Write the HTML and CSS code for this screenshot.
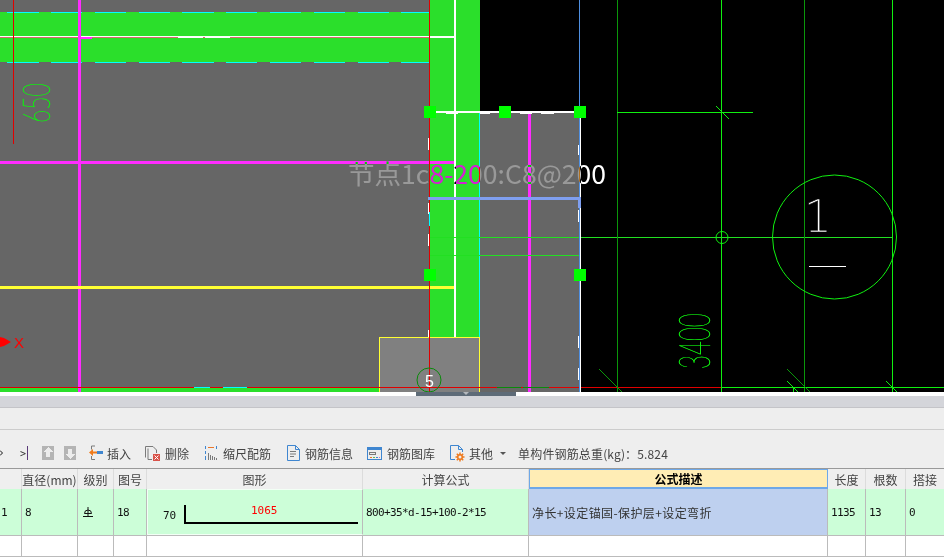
FILE: index.html
```html
<!DOCTYPE html>
<html lang="zh-CN">
<head>
<meta charset="utf-8">
<title>钢筋编辑</title>
<link rel="stylesheet" href="styles.css">
</head>
<body>
<div class="app">
  <svg class="cad" width="944" height="392" viewBox="0 0 944 392" shape-rendering="crispEdges">
    <rect class="f-black" x="0" y="0" width="944" height="392"/>
    <rect class="f-gray" x="0" y="0" width="430" height="392"/>
    <rect class="f-gray" x="430" y="112" width="150" height="280"/>
    <rect class="f-green" x="0" y="12" width="430" height="50"/>
    <rect class="f-green" x="430" y="0" width="50" height="337"/>
    <rect class="f-green" x="0" y="388" width="380" height="4"/>
    <rect class="f-light" x="379" y="337" width="101" height="55"/>
    <path class="s-cyan" d="M7 12.500H39M51 12.500H82M95 12.500H126M139 12.500H170M182 12.500H214M226 12.500H257M270 12.500H301M314 12.500H345M358 12.500H389M401 12.500H429M7 62.500H39M51 62.500H82M95 62.500H126M139 62.500H170M182 62.500H214M226 62.500H257M270 62.500H301M314 62.500H345M358 62.500H389M401 62.500H429M479.500 112V337"/>
    <path class="s-white" d="M0 36.500H429"/>
    <path class="s-pink" d="M0 37.500H178M203 37.500H205M230 37.500H429"/>
    <path class="s-white" d="M178 37.500H203M205 37.500H230"/>
    <rect class="f-white" x="429" y="36" width="25" height="2"/>
    <rect class="f-white" x="454" y="0" width="2" height="337"/>
    <rect class="f-magenta" x="78" y="0" width="3" height="392"/>
    <rect class="f-magenta" x="81" y="37" width="11" height="2"/>
    <rect class="f-magenta" x="0" y="161" width="454" height="3"/>
    <rect class="f-magenta" x="528" y="113" width="3" height="279"/>
    <rect class="f-yellow" x="0" y="286" width="454" height="3"/>
    <path class="s-yellow" d="M379.500 392V337.500H479.500V392"/>
    <path class="s-green" d="M430 237.500H893M430 255.500H579"/>
    <path class="s-red" d="M13.500 0V144M429.500 0V392M0 387.500H722"/>
    <path class="s-cyan" d="M194 387.500H210M223 387.500H247"/>
    <path class="s-dim" d="M497 387.500H521M523 387.500H549"/>
    <path class="s-blue" d="M579.500 0V392"/>
    <path class="s-white" d="M580.500 112V392M428.500 138V150M428.500 203V214M428.500 234V246M428.500 330V337M578.500 145V155M578.500 210V222M578.500 336V348M578.500 368V380"/>
    <path class="s-cyan" d="M429.500 212V226"/>
    <rect class="f-white" x="430" y="111" width="150" height="2"/>
    <path class="s-white" d="M446 113.500H458M480 113.500H490M520 113.500H532M541 113.500H554"/>
    <rect class="f-peri" x="428" y="197" width="152" height="3"/>
    <rect class="f-peri" x="578" y="197" width="3" height="11"/>
    <rect class="f-handle" x="424" y="106" width="12" height="12"/>
    <rect class="f-handle" x="499" y="106" width="12" height="12"/>
    <rect class="f-handle" x="574" y="106" width="12" height="12"/>
    <rect class="f-handle" x="424" y="269" width="12" height="12"/>
    <rect class="f-handle" x="574" y="269" width="12" height="12"/>

    <path class="s-dim2" d="M617.500 0V392M804.500 0V392"/>
    <path class="s-lime" d="M721.500 0V392M892.500 0V392M617 112.500H753M722 387.500H944M793.500 387V392"/>
    <g shape-rendering="auto">
      <path class="s-lime-a" d="M716 106L729 119M787 381L798 392M886 381L897 392"/>
      <path class="s-dim2-a" d="M599 369L622 392M787 369L810 392"/>
      <circle class="s-lime-a" cx="722" cy="237.500" r="6"/>
      <circle class="s-lime-a" cx="834.500" cy="237" r="62"/>
      <circle class="s-circ5" cx="429" cy="380" r="12"/>
      <polygon class="f-red" points="0,337 4,338 11,342 4,346 0,347"/>
      <text class="t-x" x="14" y="348">X</text>
      <text class="t-cad t-650" transform="translate(50 123) rotate(-90) scale(0.62 1)">650</text>
      <text class="t-cad t-3400" transform="translate(710 369) rotate(-90) scale(0.56 1)">3400</text>
      <text class="t-one" x="804" y="232">1</text>
      <text class="t-five" x="425" y="387">5</text>
      <text class="t-label" x="348" y="184" textLength="258" lengthAdjust="spacingAndGlyphs">节点1c8-200:C8@200</text>
    </g>
    <path class="s-white" d="M809 266.500H846"/>
  </svg>

  <div class="splitter"><div class="grip"><i class="grip-arrow"></i></div></div>
  <div class="band"></div>
  <div class="panel"></div>

  <div class="toolbar">
    <svg class="ic nav-cut" width="3" height="6" viewBox="0 0 3 6"><path class="i-dark" d="M0 .5L2.500 3L0 5.500"/></svg>
    <span class="nav nav-end">&gt;<b class="end-bar"></b></span>
    <svg class="ic ic-arrow" width="12" height="14" viewBox="0 0 12 14" shape-rendering="crispEdges"><rect class="i-dis" width="12" height="14"/><path class="i-arrow" d="M6 1L11 6H8V11H4V6H1Z"/></svg>
    <svg class="ic ic-arrow2" width="12" height="14" viewBox="0 0 12 14" shape-rendering="crispEdges"><rect class="i-dis" width="12" height="14"/><path class="i-arrow" d="M6 13L11 8H8V3H4V8H1Z"/></svg>

    <span class="tool tool-insert"><svg width="14" height="16" viewBox="0 0 14 16" class="ic"><path class="i-gray" d="M6 1H2.500V4.500M6 14.500H2.500V11"/><path class="i-orange-f" d="M0 7.500L4 4V6.500H8V8.500H4V11Z"/><rect class="i-blue-f" x="8" y="6" width="6" height="3"/></svg>插入</span>
    <span class="tool tool-del"><svg width="15" height="17" viewBox="0 0 15 17" class="ic"><path class="i-gray" d="M.5 12.500V1.500H8L11.500 5V8M3 14.500H7M3 3.500V14.500"/><rect class="i-red-f" x="8" y="9" width="7" height="7"/><path class="i-white" d="M9.500 10.500L13.500 14.500M13.500 10.500L9.500 14.500"/></svg>删除</span>
    <span class="tool tool-scale"><svg width="14" height="16" viewBox="0 0 14 16" class="ic" shape-rendering="crispEdges"><path class="i-orange" d="M4 2.500H10"/><path class="i-blue" d="M1.500 1V4M1.500 6V9M1.500 11V15M12.500 1V4"/><path class="i-gray" d="M4.500 8V15M6.500 10V15M8.500 11V15M10.500 12V15M12.500 13V15"/></svg>缩尺配筋</span>
    <span class="tool tool-info"><svg width="13" height="16" viewBox="0 0 13 16" class="ic"><path class="i-blue" d="M.5 .5H8.500L12.500 4.500V15.500H.5Z"/><path class="i-blue" d="M8.500 .5V4.500H12.500"/><path class="i-gray" d="M3 6.500H9M3 9H9M3 11.500H7"/></svg>钢筋信息</span>
    <span class="tool tool-lib"><svg width="15" height="13" viewBox="0 0 15 13" class="ic" shape-rendering="crispEdges"><rect class="i-blue" x=".5" y=".5" width="14" height="12"/><rect class="i-blue-f" x="0" y="0" width="15" height="3"/><rect class="i-gray" x="2.500" y="5.500" width="6" height="2"/><path class="i-orange" d="M3 10.500H5"/><path class="i-green" d="M6 10.500H8"/><path class="i-blue" d="M9 10.500H11"/><path class="i-pinkline" d="M12 10.500H13"/></svg>钢筋图库</span>
    <span class="tool tool-other"><svg width="15" height="17" viewBox="0 0 15 17" class="ic"><path class="i-blue" d="M5 14.500H.5V.5H8.500L12.500 4.500V7"/><path class="i-blue" d="M8.500 .5V4.500H12.500"/><circle class="i-gear" cx="10" cy="12" r="3"/><path class="i-gearteeth" d="M10 7.500V16.500M5.500 12H14.500M6.800 8.800L13.200 15.200M13.200 8.800L6.800 15.200"/><circle class="i-hole" cx="10" cy="12" r="1.500"/></svg>其他<i class="caret"></i></span>
    <span class="total">单构件钢筋总重(kg)：5.824</span>
  </div>

  <div class="grid">
    <div class="row head">
      <div class="cell"></div>
      <div class="cell">直径(mm)</div>
      <div class="cell">级别</div>
      <div class="cell">图号</div>
      <div class="cell">图形</div>
      <div class="cell">计算公式</div>
      <div class="cell cell-active">公式描述</div>
      <div class="cell">长度</div>
      <div class="cell">根数</div>
      <div class="cell cell-last">搭接</div>
    </div>
    <div class="row data">
      <div class="cell num cell-first">1</div>
      <div class="cell num">8</div>
      <div class="cell num">
        <svg class="grade" width="10" height="10" viewBox="0 0 10 10"><path class="i-dark" d="M1.500 6.500A3.500 3.500 0 0 1 8.500 6.500H1.500M5 0V9M0 9.500H10"/></svg>
      </div>
      <div class="cell num">18</div>
      <div class="cell shape">
        <svg width="214" height="44" viewBox="0 0 214 44">
          <text class="t-dim" x="15" y="29">70</text>
          <text class="t-len" x="103" y="24">1065</text>
          <path class="s-bar" d="M37 15V33H210"/>
        </svg>
      </div>
      <div class="cell num">800+35*d-15+100-2*15</div>
      <div class="cell desc">净长+设定锚固-保护层+设定弯折</div>
      <div class="cell num">1135</div>
      <div class="cell num">13</div>
      <div class="cell num cell-last">0</div>
    </div>
    <div class="row empty">
      <div class="cell"></div><div class="cell"></div><div class="cell"></div><div class="cell"></div><div class="cell"></div>
      <div class="cell"></div><div class="cell"></div><div class="cell"></div><div class="cell"></div><div class="cell cell-last"></div>
    </div>
  </div>
</div>
</body>
</html>
```

FILE: styles.css
```css
* { box-sizing: border-box; }
html, body { margin: 0; padding: 0; background: #fff; }
.app {
  width: 944px;
  height: 560px;
  overflow: hidden;
  display: flex;
  flex-direction: column;
  font-family: "Noto Sans CJK SC", "Liberation Sans", sans-serif;
  font-size: 12px;
  color: #3f3f3f;
}
.cad { display: block; flex: none; }

/* CAD fills */
.f-black { fill: #000; }
.f-gray { fill: #666; }
.f-light { fill: #808080; }
.f-green { fill: #2bdf2b; }
.f-white { fill: #fff; }
.f-magenta { fill: #ff2bff; }
.f-yellow { fill: #ffff33; }
.f-peri { fill: #7f9ff0; }
.f-handle { fill: #00ff00; }
.f-red { fill: #f00; }

/* CAD strokes */
.s-cyan, .s-white, .s-pink, .s-yellow, .s-green, .s-red, .s-dim, .s-blue, .s-dim2, .s-lime, .s-lime-a, .s-dim2-a, .s-circ5 { fill: none; stroke-width: 1; }
.s-cyan { stroke: #00ffff; }
.s-white { stroke: #fff; }
.s-pink { stroke: #d86a6a; }
.s-yellow { stroke: #ffff33; }
.s-green { stroke: #22e022; }
.s-red { stroke: #e00000; }
.s-dim { stroke: #0a8a0a; }
.s-blue { stroke: #4f8fe0; }
.s-dim2, .s-dim2-a { stroke: #0a960a; }
.s-lime, .s-lime-a { stroke: #10f010; }
.s-circ5 { stroke: #0a8a0a; }

/* CAD text */
.t-x { fill: #f00; font: 15px "Liberation Sans", sans-serif; }
.t-cad {
  fill: #10f010;
  stroke: #10f010;
  stroke-width: 0.5;
  font-family: "Lato", "Roboto", sans-serif;
  font-weight: 100;
}
.t-650 { font-size: 37px; }
.t-3400 { font-size: 43px; }
.t-one {
  fill: #fff;
  stroke: #000;
  stroke-width: 0.6;
  font-family: "DejaVu Sans", sans-serif;
  font-weight: 200;
  font-size: 44px;
}
.t-five { fill: #fff; font: 16px "Liberation Sans", sans-serif; }
.t-label {
  fill: #fff;
  font-family: "Noto Sans CJK SC", sans-serif;
  font-size: 26px;
  mix-blend-mode: difference;
}

/* Splitter and bands */
.splitter { height: 4px; flex: none; background: #fff; padding-left: 416px; }
.grip { width: 100px; height: 4px; background: #5e6b78; display: flex; justify-content: center; }
.grip-arrow { width: 0; height: 0; border: 3px solid transparent; border-top-color: #b4b8bd; border-bottom: 0; }
.band { height: 12px; flex: none; background: #d4d5da; border-bottom: 1px solid #c4c4c8; }
.panel { height: 22px; flex: none; background: #eee; border-bottom: 1px solid #ccc; }

/* Toolbar */
.toolbar {
  height: 39px;
  flex: none;
  background: #eee;
  border-bottom: 1px solid #999;
  display: flex;
  align-items: center;
  padding-top: 9px;
  padding-bottom: 1px;
  white-space: nowrap;
  font-size: 12px;
  color: #444;
}
.ic { flex: none; display: block; }
.nav { font: 10px "DejaVu Sans Mono", monospace; color: #333; display: flex; align-items: center; }
.nav-cut { margin-right: 17px; }
.nav-end { width: 22px; gap: 1px; }
.end-bar { width: 1px; height: 14px; background: #5a3a78; }
.ic-arrow { margin-right: 10px; }
.ic-arrow2 { margin-right: 13px; }
.tool { display: flex; align-items: center; gap: 5px; }
.tool-insert { margin-right: 14px; gap: 4px; }
.tool-del { margin-right: 15px; }
.tool-scale { margin-right: 16px; }
.tool-info { margin-right: 14px; }
.tool-lib { margin-right: 15px; }
.tool-other { margin-right: 12px; gap: 4px; }
.caret { width: 0; height: 0; border: 3px solid transparent; border-top: 3px solid #555; border-bottom: 0; margin-left: 3px; }
.total { letter-spacing: 0.15px; }

.i-dis { fill: #b4b4b4; }
.i-arrow { fill: #ececec; }
.i-gray { fill: none; stroke: #7a7a7a; stroke-width: 1; }
.i-orange { fill: none; stroke: #e8762c; stroke-width: 1; }
.i-orange-f { fill: #f07a1a; }
.i-blue { fill: none; stroke: #3f86d0; stroke-width: 1; }
.i-blue-f { fill: #3f86d0; }
.i-green { fill: none; stroke: #5bb85b; stroke-width: 1; }
.i-pinkline { fill: none; stroke: #d070c0; stroke-width: 1; }
.i-red-f { fill: #d9534a; }
.i-white { fill: none; stroke: #fff; stroke-width: 1; }
.i-gear { fill: #ee7a1e; }
.i-gearteeth { fill: none; stroke: #ee7a1e; stroke-width: 1.500; }
.i-hole { fill: #eee; }
.i-dark { fill: none; stroke: #111; stroke-width: 1; }

/* Table */
.grid { flex: none; display: flex; flex-direction: column; }
.row {
  display: grid;
  grid-template-columns: 22px 56px 36px 33px 216px 166px 299px 38px 40px 38px;
}
.cell {
  border-right: 1px solid #bbb;
  display: flex;
  align-items: center;
  overflow: hidden;
  white-space: nowrap;
}
.cell-last { border-right: 0; }

.head { height: 20px; background: #efefef; }
.head .cell { justify-content: center; border-right-color: #dcdcdc; color: #444; }
.head .cell-active {
  background: #ffedb5;
  border: 1px solid #6ea8e8;
  border-bottom-width: 2px;
  color: #000;
  font-weight: 700;
}
.data { height: 47px; background: #ccfed8; border-bottom: 1px solid #bbb; }
.num {
  font: 11px "DejaVu Sans Mono", monospace;
  letter-spacing: -0.62px;
  color: #111;
  padding-left: 3px;
}
.cell-first { padding-left: 1px; }
.grade { display: block; margin-left: 2px; }
.shape { border: 1px solid #f2fff5; border-right: 1px solid #bbb; }
.desc { background: #bed0ef; padding-left: 3px; color: #333; letter-spacing: 0.4px; }
.empty { height: 21px; background: #fff; border-bottom: 1px solid #bbb; }

.t-dim { fill: #111; font: 11px "DejaVu Sans Mono", monospace; }
.t-len { fill: #f00; font: 11px "DejaVu Sans Mono", monospace; }
.s-bar { fill: none; stroke: #000; stroke-width: 2; }
```
